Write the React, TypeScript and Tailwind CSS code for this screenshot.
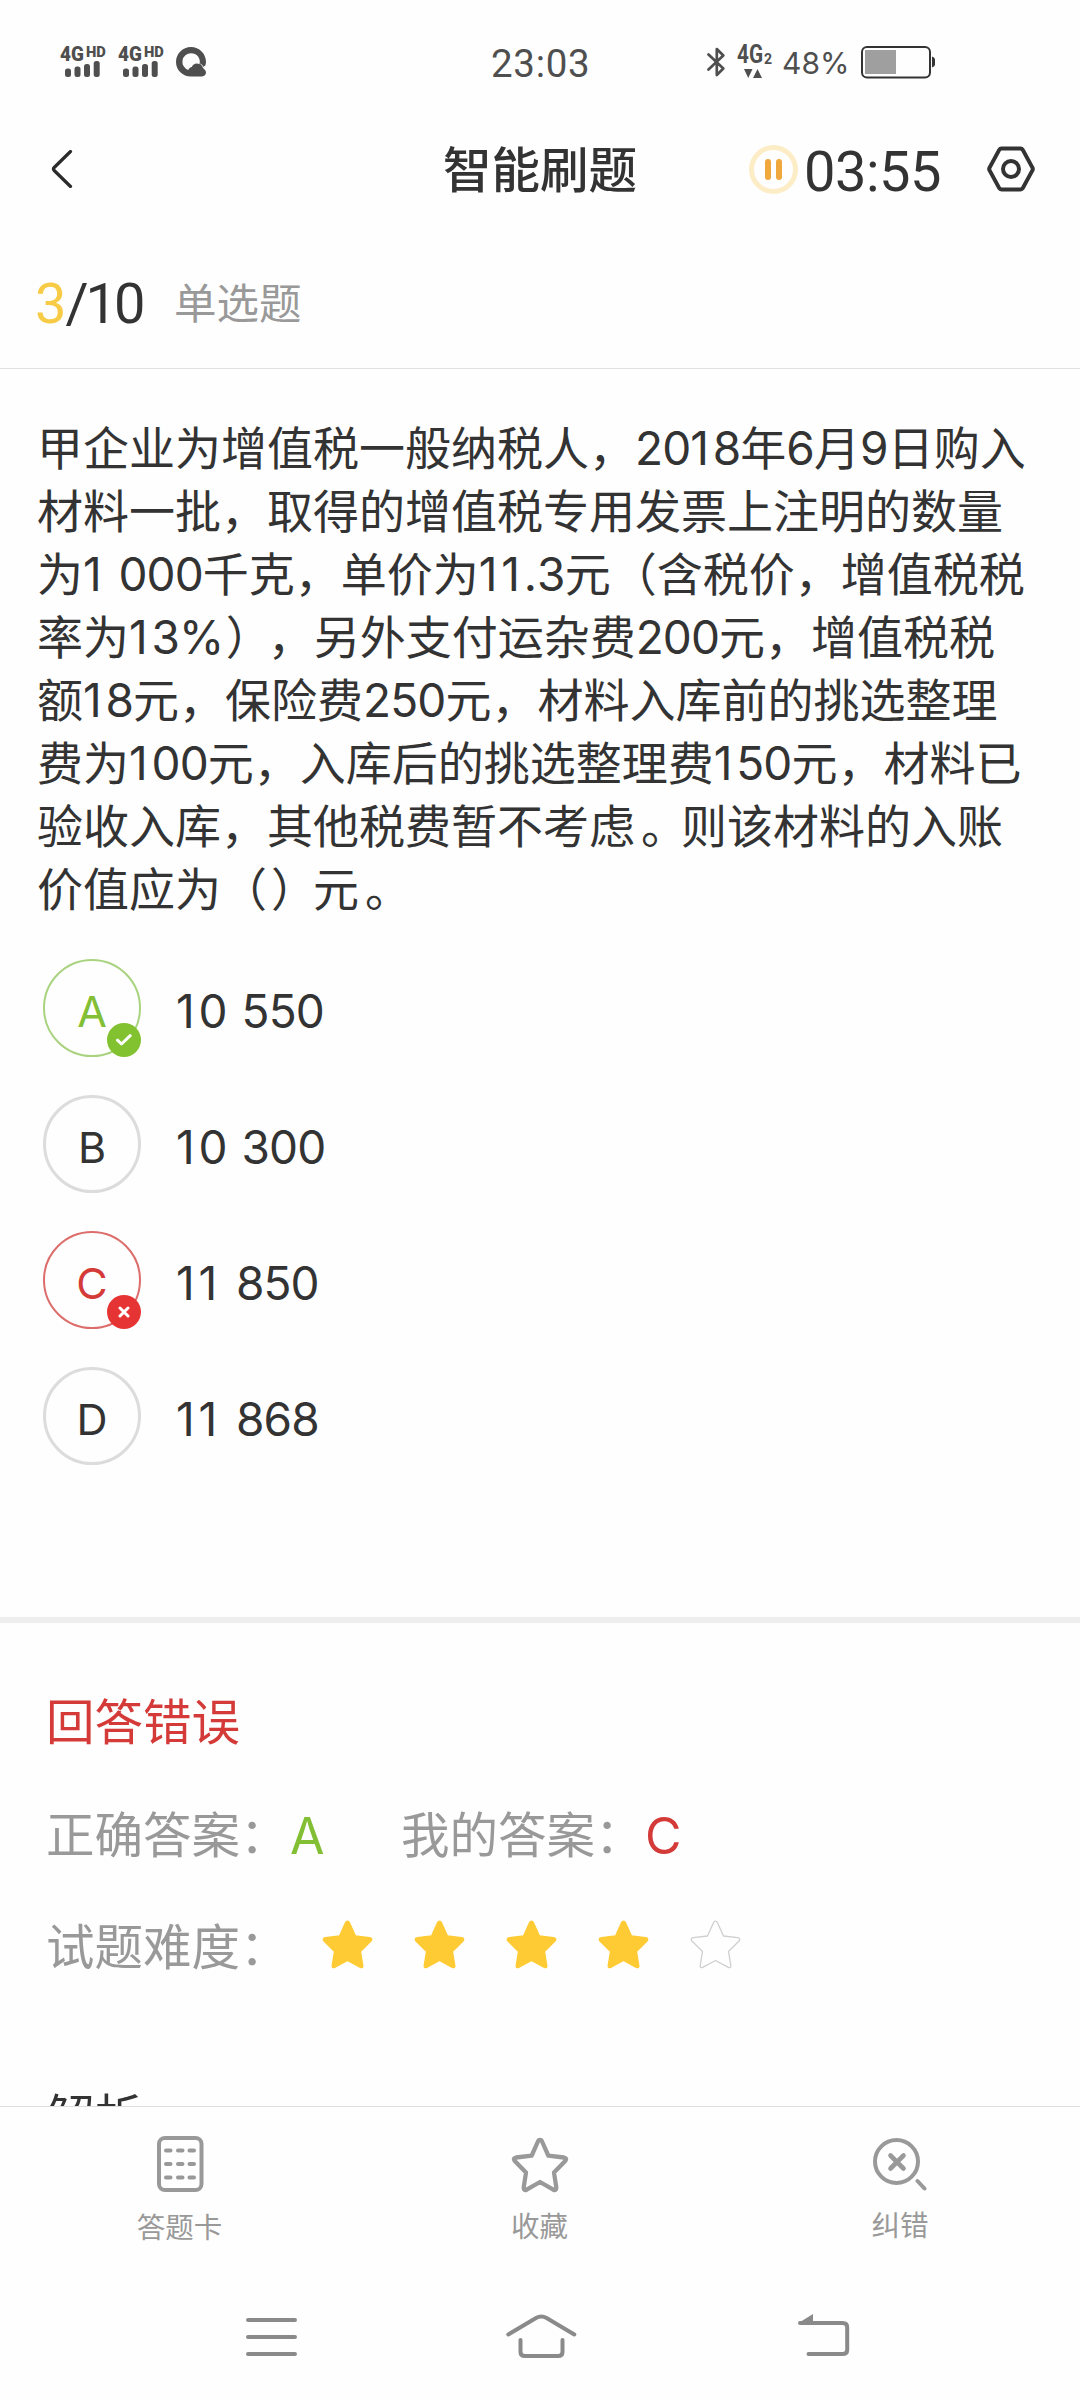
import React from "react";

const QUESTION_LINES: string[] = [
  "甲企业为增值税一般纳税人，2018年6月9日购入",
  "材料一批，取得的增值税专用发票上注明的数量",
  "为1 000千克，单价为11.3元（含税价，增值税税",
  "率为13%），另外支付运杂费200元，增值税税",
  "额18元，保险费250元，材料入库前的挑选整理",
  "费为100元，入库后的挑选整理费150元，材料已",
  "验收入库，其他税费暂不考虑。则该材料的入账",
  "价值应为（）元。",
];

type Mark = "right" | "wrong" | "none";

const OPTIONS: { letter: string; value: string; mark: Mark }[] = [
  { letter: "A", value: "10 550", mark: "right" },
  { letter: "B", value: "10 300", mark: "none" },
  { letter: "C", value: "11 850", mark: "wrong" },
  { letter: "D", value: "11 868", mark: "none" },
];

const CIRCLE: Record<Mark, string> = {
  right: "border-2 border-[#a9d37f] text-[#82bf35]",
  wrong: "border-2 border-[#dc6d6b] text-[#d33a38]",
  none: "border-[3px] border-[#dcdcdc] text-[#333333]",
};

/** Spacing of single glyphs: a roomy "1", tighter other digits, centred stops. */
function glyphClass(part: string): string | undefined {
  if (/^1+$/.test(part)) return "tracking-[3.8px]";
  if (/^[02-9]+$/.test(part)) return "tracking-[-0.9px]";
  if (part === "%") return "tracking-[-2.5px]";
  if (part === "。") return "relative left-[6px]";
  if (part === "）") return "relative left-[4px]";
  return undefined;
}

function Spaced({ text }: { text: string }) {
  const parts = text.match(/1+|[02-9]+|%|。|）|[^0-9%。）]+/g) ?? [];
  return (
    <>
      {parts.map((part, i) => {
        const cls = glyphClass(part);
        return cls ? (
          <span key={i} className={cls}>
            {part}
          </span>
        ) : (
          part
        );
      })}
    </>
  );
}

function Signal() {
  return (
    <div className="flex w-[58px] flex-col">
      <div className="flex h-[15px] items-start font-['Roboto'] font-black text-[#4f4f4f]">
        <span className="w-[25.5px] origin-left scale-x-[0.9] text-[21px] leading-[15px]">4G</span>
        <span className="origin-left scale-x-[1.05] text-[14px] leading-[10px]">HD</span>
      </div>
      <svg width="40" height="16" viewBox="0 0 40 16" fill="#4f4f4f" className="ml-[5px] -mt-px">
        <rect x="0" y="7.500" width="6" height="8.500" rx="2.500" />
        <rect x="9.500" y="5.500" width="6" height="10.500" rx="2.500" />
        <rect x="19" y="3" width="6" height="13" rx="2.500" />
        <rect x="28.700" y="0" width="6" height="16" rx="2.500" />
      </svg>
    </div>
  );
}

function StatusBar() {
  return (
    <div className="flex h-[104px] shrink-0 items-start">
      <div className="flex w-[491px] pl-[60px] pt-[47px]">
        <Signal />
        <Signal />
        <svg width="30" height="30" viewBox="0 0 30 30">
          <path
            d="M15 0C6.700 0 0 6.700 0 15s6.700 14.500 15 14.500h11c2.300 0 4-1.600 4-3.900 0-2-1.200-3.400-2.700-3.900C29 19.600 30 17.300 30 15 30 6.700 23.300 0 15 0z"
            fill="#4f4f4f"
          />
          <path d="M15 6.200a8.600 8.600 0 0 0-2.600 16.800c.5-1.900 1.800-3 3.400-3.100.9-2.200 2.900-3.500 5.100-3.400 1 0 1.800.3 2.600.8A8.700 8.700 0 0 0 15 6.200z" fill="#fefefe" />
          <path d="M24.500 17c1.700 1 2.600 2.400 2.900 4l1.400-2" fill="none" stroke="#fefefe" strokeWidth="1" />
        </svg>
      </div>
      <div className="w-[216px] pt-[42px] font-['Roboto'] text-[38.500px] leading-[44px] tracking-[0.700px] text-[#4f4f4f]">23:03</div>
      <svg width="18" height="30" viewBox="0 0 18 30" className="mt-[47px]" fill="none" stroke="#4f4f4f" strokeWidth="2.700" strokeLinejoin="round" strokeLinecap="round">
        <path d="M1.500 7.500 16.300 21.500 9.800 28V2l6.500 6.500L1.500 22.500" />
      </svg>
      <div className="ml-[12px] mt-[46px] flex w-[45px] flex-col text-[#4f4f4f]">
        <div className="flex h-[23px] items-start font-['Roboto'] font-bold">
          <span className="w-[27px] origin-left scale-x-[0.83] text-[25px] leading-[18px]">4G</span>
          <span className="pt-[8px] text-[14px] leading-[10px]">2</span>
        </div>
        <svg width="18" height="9" viewBox="0 0 18 9" fill="#4f4f4f" className="ml-[7px]">
          <path d="M0 0h8.500L4.250 9zM9 9h9L13.500 0z" />
        </svg>
      </div>
      <div className="w-[79px] pt-[42px] font-['Inter'] text-[30px] leading-[42px] text-[#4f4f4f]">48%</div>
      <svg width="75" height="33" viewBox="0 0 75 33" className="mt-[46px]">
        <rect x="1" y="1" width="68" height="30.500" rx="5" fill="none" stroke="#333" strokeWidth="2" />
        <rect x="4" y="4" width="31" height="24" fill="#9f9f9f" />
        <path d="M71 10.500q3 1 3 3v5q0 2-3 3z" fill="#333" />
      </svg>
    </div>
  );
}

function Header() {
  return (
    <div className="flex h-[131px] shrink-0 items-center">
      <svg width="392" height="38" viewBox="0 0 392 38" fill="none" className="-mt-[2px] ml-[51px]">
        <path d="M19.500 1.500 3.200 17.500q-1.500 1.500 0 3L19.500 36.500" stroke="#2b2b2b" strokeWidth="3.200" strokeLinecap="round" />
      </svg>
      <div className="w-[306px] pt-[3px] text-[48.500px] font-medium leading-[60px] text-[#333333]">智能刷题</div>
      <div className="flex size-[49px] shrink-0 items-center justify-center gap-[5.500px] rounded-full border-[5px] border-[#fdedc6]">
        <span className="h-[21px] w-[6px] rounded-full bg-[#f0a73c]" />
        <span className="h-[21px] w-[6px] rounded-full bg-[#f0a73c]" />
      </div>
      <div className="w-[189px] shrink-0 pl-[6px] pt-[5px] font-['Roboto'] text-[56px] leading-[60px] tracking-[-0.500px] text-[#333333]">03:55</div>
      <svg width="48" height="46" viewBox="0 0 48 46" fill="none" stroke="#333333" strokeWidth="4" className="-mt-[2px] shrink-0">
        <path d="M14.500 2.500h19q1.500 0 2.300 1.400l9.600 17.700q.8 1.400 0 2.800l-9.600 17.700q-.8 1.400-2.300 1.400h-19q-1.500 0-2.300-1.400L2.600 24.400q-.8-1.400 0-2.800l9.600-17.700q.8-1.400 2.300-1.400z" />
        <circle cx="24" cy="23" r="8" />
      </svg>
    </div>
  );
}

function OptionRow({ letter, value, mark }: { letter: string; value: string; mark: Mark }) {
  return (
    <div className="flex h-[98px] items-center">
      <div className={`relative flex size-[98px] items-center justify-center rounded-full ${CIRCLE[mark]}`}>
        <span className="pt-[5px] font-['Inter'] text-[43px] leading-[48px]">{letter}</span>
        {mark !== "none" && (
          <span
            className={`absolute -bottom-[2px] -right-[2px] flex size-[34px] items-center justify-center rounded-full ${
              mark === "right" ? "bg-[#82c12f]" : "bg-[#e63434]"
            }`}
          >
            {mark === "right" ? (
              <svg width="16" height="12" viewBox="0 0 16 12" fill="none" stroke="#fff" strokeWidth="3" strokeLinecap="round" strokeLinejoin="round">
                <path d="M1.500 6.200 5.500 10 14.200 1.700" />
              </svg>
            ) : (
              <svg width="12" height="12" viewBox="0 0 12 12" fill="none" stroke="#fff" strokeWidth="3" strokeLinecap="round">
                <path d="M2 2l8 8M10 2l-8 8" />
              </svg>
            )}
          </span>
        )}
      </div>
      <span className="ml-[35px] whitespace-pre pt-[5px] font-['Inter'] text-[46px] leading-[56px] text-[#333333] [word-spacing:2px]">
        <Spaced text={value} />
      </span>
    </div>
  );
}

const STAR =
  "M25.500 2.200q1.300 0 2 1.600l6 13.200 14 1.700q3.800.6 1.300 3.600L38.500 32.500l2.300 14q.3 3-2.500 1.900L25.500 41.500 12.700 48.400q-2.800 1.100-2.500-1.900l2.300-14L2.200 22.300q-2.500-3 1.300-3.600l14-1.700 6-13.200q.7-1.600 2-1.600z";

function DifficultyStars() {
  return (
    <div className="-mt-[8px] flex gap-[41px]">
      {[1, 2, 3, 4, 5].map((n) => (
        <svg key={n} width="51" height="51" viewBox="0 0 51 51">
          <path d={STAR} fill={n < 5 ? "#fecb34" : "none"} stroke={n < 5 ? "#fecb34" : "#cfcfcf"} strokeWidth="1.300" strokeLinejoin="round" />
        </svg>
      ))}
    </div>
  );
}

function BottomTabs() {
  return (
    <div className="flex h-[168px] shrink-0 border-t border-[#dedede] text-[28.500px] leading-[40px] text-[#999999]">
      <div className="flex w-[359px] flex-col items-center pt-[28px]">
        <svg width="48" height="58" viewBox="0 0 48 58" fill="none" stroke="#999999" strokeWidth="4">
          <rect x="3" y="3" width="42.500" height="52" rx="6" />
          <path d="M10 15.500h4.500M22 15.500h4.500M33.500 15.500H38M10 29h4.500M22 29h4.500M33.500 29H38M10 42.500h4.500M22 42.500h4.500M33.500 42.500H38" strokeLinecap="round" />
        </svg>
        <span className="mt-[15px]">答题卡</span>
      </div>
      <div className="flex w-[361px] flex-col items-center pt-[28px]">
        <svg width="58" height="58" viewBox="0 0 58 58" fill="none" stroke="#999999" strokeWidth="4.300" strokeLinejoin="round">
          <path d="M29 5q1.500 0 2.300 2l6 13.700L53 22.500q3.500.8 1.200 3.600L43 37.500l2.300 15q0 3.500-3 2.200L29 47l-13.300 7.700q-3 1.300-3-2.200l2.300-15L3.800 26.100Q1.500 23.300 5 22.500l15.700-1.800L26.700 7q.8-2 2.300-2z" />
        </svg>
        <span className="mt-[14px]">收藏</span>
      </div>
      <div className="flex w-[360px] flex-col items-center pt-[28px]">
        <svg width="54" height="58" viewBox="0 0 54 58" fill="none" stroke="#999999" strokeWidth="4" strokeLinecap="round">
          <circle cx="23.500" cy="26.500" r="21.500" />
          <path d="M17.500 20.500l13 13M30.500 20.500l-13 13" strokeWidth="4.600" />
          <path d="M44.500 46l7 7.500" />
        </svg>
        <span className="mt-[13px]">纠错</span>
      </div>
    </div>
  );
}

function SystemNav() {
  return (
    <div className="flex h-[126px] shrink-0 items-start pl-[246px] pt-[40px]">
      <svg width="51" height="46" viewBox="0 0 51 46" stroke="#8a8a8a" strokeWidth="4" strokeLinecap="round">
        <path d="M2 6h47M2 23h47M2 40h47" />
      </svg>
      <svg width="71" height="46" viewBox="0 0 71 46" fill="none" stroke="#8a8a8a" strokeWidth="4" strokeLinecap="round" className="ml-[209px]">
        <path d="M2.300 20.500 30 4q5.300-2.800 10.600 0L68.300 20.500" />
        <path d="M14.500 26v12q0 4 4.500 4h33q4.500 0 4.500-4V26" />
      </svg>
      <svg width="52" height="46" viewBox="0 0 52 46" fill="none" stroke="#8a8a8a" strokeWidth="4" strokeLinecap="round" className="ml-[221px]">
        <path d="M2 9h42.500q4.700 0 4.700 4v23q0 4-4.700 4H10.500" />
        <path d="M0.500 9 15 0v9z" fill="#8a8a8a" stroke="none" />
      </svg>
    </div>
  );
}

export default function App() {
  return (
    <div className="flex h-[2400px] w-[1080px] flex-col overflow-hidden whitespace-nowrap bg-[#fefefe] font-['Inter','Noto_Sans_CJK_SC',sans-serif] text-[#333333] [text-spacing-trim:space-all]">
      <StatusBar />
      <Header />
      <div className="flex h-[134px] shrink-0 items-center border-b border-[#e0e0e0] pl-[35px] pt-[5px]">
        <div className="w-[139px] font-['Roboto'] text-[56px] leading-[64px] tracking-[-3px]">
          <span className="tracking-[-1px] text-[#f8cb46]">3</span>/10
        </div>
        <span className="text-[42.500px] leading-[60px] text-[#999999]">单选题</span>
      </div>

      <div className="shrink-0 pl-[37px] pt-[48px] text-[46px] leading-[63px]">
        {QUESTION_LINES.map((line) => (
          <div key={line}>
            <Spaced text={line} />
          </div>
        ))}
      </div>

      <div className="mt-[38px] flex shrink-0 flex-col gap-[38px] pl-[43px]">
        {OPTIONS.map((o) => (
          <OptionRow key={o.letter} {...o} />
        ))}
      </div>

      <div className="mt-[152px] h-[6px] shrink-0 bg-[#eeeeee]" />

      <div className="flex min-h-0 grow flex-col overflow-hidden pl-[46px] pt-[65px] text-[48.500px] leading-[70px]">
        <div className="text-[#d33a38]">回答错误</div>
        <div className="mt-[43px] flex text-[#999999]">
          <span className="w-[244px]">正确答案：</span>
          <span className="w-[111px] text-[50px] text-[#82bf35]">A</span>
          <span className="w-[244px]">我的答案：</span>
          <span className="text-[50px] text-[#d33a38]">C</span>
        </div>
        <div className="mt-[42px] flex items-center text-[#999999]">
          <span className="w-[276px]">试题难度：</span>
          <DifficultyStars />
        </div>
        <div className="mt-[100px]">解析</div>
      </div>

      <BottomTabs />
      <SystemNav />
    </div>
  );
}
